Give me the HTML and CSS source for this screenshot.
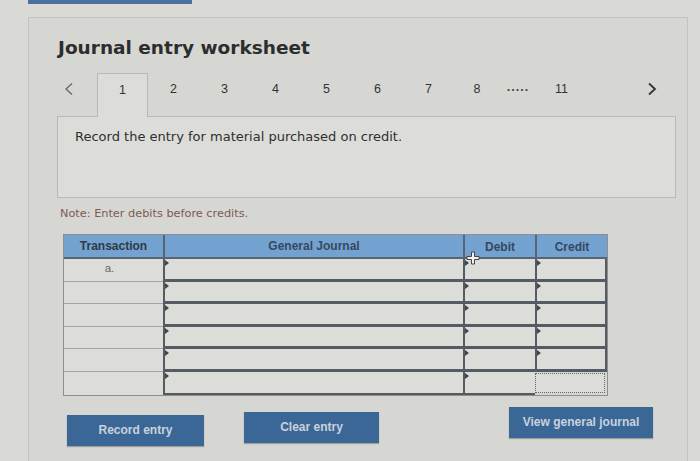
FILE: index.html
```html
<!DOCTYPE html>
<html lang="en">
<head>
<meta charset="utf-8">
<title>Journal entry worksheet</title>
<link rel="stylesheet" href="styles.css">
</head>
<body>
<div class="topbar"></div>
<div class="panel">
  <h1 class="title">Journal entry worksheet</h1>
  <div class="tabs">
    <span class="arrow prev">
      <svg width="10" height="14" viewBox="0 0 10 14"><path d="M8 1.5 L2 7 L8 12.5" fill="none" stroke="#6a6a6a" stroke-width="1.4"/></svg>
    </span>
    <span class="tab active">1</span>
    <span class="tab">2</span>
    <span class="tab">3</span>
    <span class="tab">4</span>
    <span class="tab">5</span>
    <span class="tab">6</span>
    <span class="tab">7</span>
    <span class="tab narrow">8</span>
    <span class="dots">.....</span>
    <span class="tab">11</span>
    <span class="arrow next">
      <svg width="10" height="14" viewBox="0 0 10 14"><path d="M2 1.5 L8 7 L2 12.5" fill="none" stroke="#333" stroke-width="1.8"/></svg>
    </span>
  </div>
  <div class="prompt">Record the entry for material purchased on credit.</div>
  <p class="note">Note: Enter debits before credits.</p>

  <div class="journal">
    <div class="th tx">Transaction</div>
    <div class="th gj">General Journal</div>
    <div class="th dr">Debit<span class="cursor"><svg width="14" height="14" viewBox="0 0 14 14"><path d="M5.5 1h3v4.5H13v3H8.5V13h-3V8.5H1v-3h4.5z" fill="#f2f2f2" stroke="#444" stroke-width="1"/></svg></span></div>
    <div class="th cr">Credit</div>

    <div class="td tx">a.</div><div class="td in gj first"></div><div class="td in dr first"></div><div class="td in cr first"></div>
    <div class="td tx"></div><div class="td in gj"></div><div class="td in dr"></div><div class="td in cr"></div>
    <div class="td tx"></div><div class="td in gj"></div><div class="td in dr"></div><div class="td in cr"></div>
    <div class="td tx"></div><div class="td in gj"></div><div class="td in dr"></div><div class="td in cr"></div>
    <div class="td tx"></div><div class="td in gj"></div><div class="td in dr"></div><div class="td in cr"></div>
    <div class="td tx last"></div><div class="td in gj last"></div><div class="td in dr last"></div><div class="td cr dotted"></div>
  </div>

  <div class="actions">
    <button class="btn record">Record entry</button>
    <button class="btn clear">Clear entry</button>
    <button class="btn view">View general journal</button>
  </div>
</div>
</body>
</html>
```
FILE: styles.css
```css
html, body {
  margin: 0;
  padding: 0;
}
body {
  background: #d9dad6;
  width: 700px;
  height: 461px;
  overflow: hidden;
  font-family: "DejaVu Sans", Verdana, sans-serif;
  color: #333;
}
.topbar {
  width: 164px;
  height: 4px;
  margin-left: 28px;
  background: #4b6f9e;
}
.panel {
  margin: 13px 12px 0 28px;
  border: 1px solid #c2c3bf;
  border-bottom: none;
  height: 444px;
  padding: 19px 11px 0 28px;
  background: #d6d7d3;
  box-sizing: border-box;
}
.title {
  margin: 0 0 0 1px;
  font-size: 18.5px;
  font-weight: bold;
  color: #2d2d2d;
  line-height: 22px;
}
.tabs {
  display: flex;
  align-items: stretch;
  height: 44px;
  margin-top: 14px;
  margin-bottom: -1px;
  position: relative;
  z-index: 1;
  font-family: "Liberation Sans", Arial, sans-serif;
  font-size: 12.5px;
}
.tabs > span {
  display: flex;
  align-items: center;
  justify-content: center;
  padding-bottom: 12px;
  box-sizing: border-box;
}
.arrow.prev {
  width: 40px;
  padding-right: 16px;
}
.tab {
  width: 51px;
  color: #333;
}
.tab.narrow {
  width: 46px;
}
.tab.active {
  border: 1px solid #b8b9b5;
  border-bottom: none;
  background: #dcddd9;
}
.dots {
  width: 36px;
  letter-spacing: 1px;
  color: #444;
  font-weight: bold;
  padding-bottom: 16px !important;
}
.arrow.next {
  margin-left: auto;
  width: 48px;
}
.prompt {
  height: 82px;
  box-sizing: border-box;
  border: 1px solid #b8b9b5;
  background: #dcddd9;
  padding: 12px 17px;
  font-size: 13px;
  color: #2f2f2f;
}
.note {
  margin: 9px 0 0 3px;
  font-size: 11.3px;
  color: #7c5a55;
  line-height: 14px;
}
.journal {
  display: grid;
  grid-template-columns: 99px 300px 72px 72px;
  grid-template-rows: 24px repeat(6, 22.6px);
  width: 543px;
  margin: 13px 0 0 6px;
  font-family: "Liberation Sans", Arial, sans-serif;
  border: 1px solid #8e8f8c;
  box-sizing: content-box;
}
.th {
  background: #74a2d0;
  font-weight: bold;
  font-size: 12px;
  color: #34495e;
  display: flex;
  align-items: center;
  justify-content: center;
  border-bottom: 2px solid #566676;
  position: relative;
}
.th.tx {
  color: #2f3a44;
}
.th.gj, .th.dr, .th.cr {
  border-left: 2px solid #566676;
}
.th.dr, .th.cr {
  align-items: flex-start;
  padding-top: 5px;
}
.cursor {
  position: absolute;
  left: 1px;
  bottom: -8px;
  line-height: 0;
  z-index: 2;
}
.td {
  background: #dcddd9;
  position: relative;
}
.td.tx {
  border-bottom: 1px solid #a3a4a0;
  font-size: 11.5px;
  color: #666;
  text-align: center;
  line-height: 18px;
  padding-right: 8px;
}
.td.tx.last {
  border-bottom: none;
}
.td.in {
  border-left: 2px solid #545b63;
  border-bottom: 3px solid #545b63;
}
.td.in.last {
  border-bottom: 2px solid #545b63;
}
.td.in::before {
  content: "";
  position: absolute;
  left: 0;
  top: 1px;
  border-top: 3px solid transparent;
  border-bottom: 3px solid transparent;
  border-left: 4px solid #3f4650;
}
.td.cr.in {
  border-right: 2px solid #545b63;
}
.td.dotted {
  border: 1px dotted #666;
  margin: 1px 2px 2px 0;
}
.actions {
  display: flex;
  align-items: flex-start;
  margin: 15px 0 0 10px;
}
.btn {
  height: 31px;
  border: none;
  background: #3b6796;
  color: #c9d2de;
  font-family: "Liberation Sans", Arial, sans-serif;
  font-weight: bold;
  font-size: 12px;
  padding: 0;
  box-shadow: 0 1px 1px rgba(0,0,0,0.25);
}
.btn.record {
  width: 137px;
  margin-top: 4px;
}
.btn.clear {
  width: 135px;
  margin-left: 40px;
  margin-top: 1px;
}
.btn.view {
  width: 144px;
  margin-left: 130px;
  margin-top: -4px;
}
```
